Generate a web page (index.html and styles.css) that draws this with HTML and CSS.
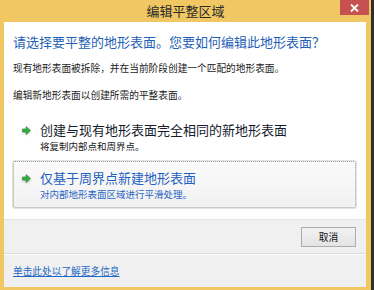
FILE: index.html
```html
<!DOCTYPE html>
<html lang="zh-CN">
<head>
<meta charset="utf-8">
<link rel="stylesheet" href="styles.css">
</head>
<body>
<div class="window">
  <div class="titlebar">
    <div class="title-spacer"></div>
    <div class="title">编辑平整区域</div>
    <div class="title-right">
      <div class="close">
        <svg width="9" height="8" viewBox="0 0 9 8"><path d="M1 0.5 L8 7.5 M8 0.5 L1 7.5" stroke="#fff" stroke-width="1.8"/></svg>
      </div>
    </div>
  </div>
  <div class="client">
    <div class="main">
      <div class="instruction">请选择要平整的地形表面。您要如何编辑此地形表面？</div>
      <p class="text">现有地形表面被拆除，并在当前阶段创建一个匹配的地形表面。</p>
      <p class="text">编辑新地形表面以创建所需的平整表面。</p>
      <div class="links">
        <div class="cmd">
          <svg class="arrow" width="9" height="9" viewBox="0 0 9 9"><path d="M0.5 3 H4.2 V0.6 L8.5 4.5 L4.2 8.4 V6 H0.5 Z" fill="#35b13f" stroke="#1d7f27" stroke-width="0.6"/></svg>
          <div class="cmd-body">
            <div class="cmd-title">创建与现有地形表面完全相同的新地形表面</div>
            <div class="cmd-sub">将复制内部点和周界点。</div>
          </div>
        </div>
        <div class="cmd focused">
          <svg class="arrow" width="9" height="9" viewBox="0 0 9 9"><path d="M0.5 3 H4.2 V0.6 L8.5 4.5 L4.2 8.4 V6 H0.5 Z" fill="#35b13f" stroke="#1d7f27" stroke-width="0.6"/></svg>
          <div class="cmd-body">
            <div class="cmd-title blue">仅基于周界点新建地形表面</div>
            <div class="cmd-sub blue">对内部地形表面区域进行平滑处理。</div>
          </div>
        </div>
      </div>
    </div>
    <div class="buttons">
      <button class="btn">取消</button>
    </div>
    <div class="footer">
      <a class="more" href="#">单击此处以了解更多信息</a>
    </div>
  </div>
</div>
</body>
</html>
```
FILE: styles.css
```css
html, body {
  margin: 0;
  padding: 0;
}
body {
  background: #2e2e2e;
  width: 374px;
  height: 290px;
  overflow: hidden;
  font-family: "Noto Sans CJK SC", "Noto Sans", sans-serif;
}
.window {
  width: 371px;
  height: 290px;
  box-sizing: border-box;
  background: #f0c762;
  padding: 0 5px 3px 4px;
  display: flex;
  flex-direction: column;
}
.titlebar {
  height: 22px;
  margin: 0 -5px 0 -4px;
  display: grid;
  grid-template-columns: 1fr auto 1fr;
}
.title {
  font-size: 13px;
  line-height: 22px;
  color: #2b2b2b;
  padding-top: 0;
}
.title-right {
  display: flex;
  justify-content: flex-end;
  padding-right: 2px;
}
.close {
  width: 29px;
  height: 15px;
  background: #c75050;
  display: flex;
  align-items: center;
  justify-content: center;
}
.client {
  flex: 1;
  display: flex;
  flex-direction: column;
  background: #f0f0f0;
}
.main {
  background: #fff;
  height: 197px;
  box-sizing: border-box;
  padding: 11px 10px 0 9px;
}
.instruction {
  font-size: 13px;
  line-height: 18px;
  color: #1f5fb5;
}
.text {
  margin: 0;
  font-size: 9.7px;
  line-height: 14px;
  color: #1a1a1a;
}
.instruction + .text {
  margin-top: 10px;
}
.text + .text {
  margin-top: 13px;
}
.links {
  margin-top: 11px;
  display: flex;
  flex-direction: column;
  gap: 1px;
}
.cmd {
  height: 47px;
  box-sizing: border-box;
  border: 1px solid transparent;
  border-radius: 2px;
  padding: 8px 0 0 8px;
  display: flex;
  gap: 9px;
}
.cmd.focused {
  border: 1px dotted #9a9a9a;
  background: linear-gradient(#fbfbfb, #f1f1f1);
  box-shadow: 0 0 0 1px #e2e2e2;
}
.arrow {
  margin-top: 4px;
  flex: none;
  filter: drop-shadow(0 1px 1px rgba(0,0,0,0.25));
}
.cmd-title {
  font-size: 13px;
  line-height: 16px;
  color: #151c2c;
}
.cmd-sub {
  font-size: 9.5px;
  line-height: 14px;
  color: #1a1a1a;
  margin-top: 1px;
}
.blue {
  color: #1f5fc0;
}
.cmd-sub.blue {
  color: #2a64c4;
}
.buttons {
  border-top: 1px solid #e4e4e4;
  height: 35px;
  box-sizing: border-box;
  padding: 7px 10px 0 0;
  display: flex;
  justify-content: flex-end;
  align-items: flex-start;
  border-bottom: 1px solid #dcdcdc;
}
.btn {
  width: 55px;
  height: 20px;
  font-family: inherit;
  font-size: 9.7px;
  line-height: 18px;
  padding: 0;
  color: #111;
  border: 1px solid #acacac;
  border-radius: 0;
  background: linear-gradient(#f2f2f2, #e3e3e3);
}
.footer {
  border-top: 1px solid #fbfbfb;
  flex: 1;
  display: flex;
  align-items: center;
  padding: 0 0 1px 9px;
}
.more {
  font-size: 9.7px;
  line-height: 14px;
  color: #2367c5;
  text-decoration: underline;
}
```
